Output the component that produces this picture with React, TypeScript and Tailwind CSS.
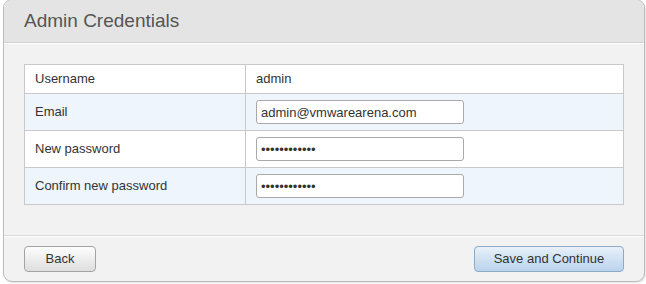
import React from "react";

const font = { fontFamily: '"Liberation Sans", Arial, sans-serif' };

function Field({ value }: { value: string }) {
  return (
    <input
      type="text"
      readOnly
      value={value}
      className="w-[208px] h-[24px] rounded-[3px] border border-[#a9a9a9] bg-white px-[4px] text-[13px] text-[#333] outline-none"
      style={font}
    />
  );
}

export default function App() {
  const rows: { label: string; value?: string; field?: string; alt: boolean }[] = [
    { label: "Username", value: "admin", alt: false },
    { label: "Email", field: "admin@vmwarearena.com", alt: true },
    { label: "New password", field: "••••••••••••", alt: false },
    { label: "Confirm new password", field: "••••••••••••", alt: true },
  ];
  return (
    <div className="w-[646px] h-[284px] bg-white pl-[3px] pr-[1px] pb-[2px] overflow-hidden" style={font}>
      <div className="mt-[-1px] h-[283px] rounded-[9px] border border-[#bcbcbc] bg-[#f2f2f2] shadow-[1px_1px_2px_rgba(0,0,0,0.12)] overflow-hidden flex flex-col">
        <div className="h-[43px] shrink-0 bg-[#e4e4e4] border-b border-[#d0d0d0] flex items-center pl-[20px] pt-[1px]">
          <span className="text-[19px] text-[#555]">Admin Credentials</span>
        </div>
        <div className="border-t border-white px-[20px] pt-[20px] h-[192px] shrink-0">
          <div className="border border-[#c9c9c9] bg-white">
            {rows.map((r, i) => (
              <div
                key={r.label}
                className={`flex ${i > 0 ? "border-t border-[#c9c9c9]" : ""} ${r.alt ? "bg-[#eef5fd]" : "bg-white"} ${i === 0 ? "h-[28px]" : "h-[37px]"}`}
              >
                <div className="w-[221px] shrink-0 border-r border-[#c9c9c9] pl-[10px] flex items-center text-[13px] text-[#333]">
                  {r.label}
                </div>
                <div className="flex-1 pl-[10px] flex items-center text-[13px] text-[#333]">
                  {r.value !== undefined ? r.value : <Field value={r.field!} />}
                </div>
              </div>
            ))}
          </div>
        </div>
        <div className="border-t border-[#d8d8d8] flex-1">
          <div className="border-t border-white flex justify-between px-[20px] pt-[9px]">
            <button
              className="w-[72px] h-[26px] rounded-[4px] border border-[#a3a3a3] bg-gradient-to-b from-[#fdfdfd] to-[#dedede] text-[13px] text-[#333]"
              style={font}
            >
              Back
            </button>
            <button
              className="w-[150px] h-[26px] rounded-[4px] border border-[#8eabc6] bg-gradient-to-b from-[#e8f1fa] to-[#b9d3ec] text-[13px] text-[#333]"
              style={font}
            >
              Save and Continue
            </button>
          </div>
        </div>
      </div>
    </div>
  );
}
